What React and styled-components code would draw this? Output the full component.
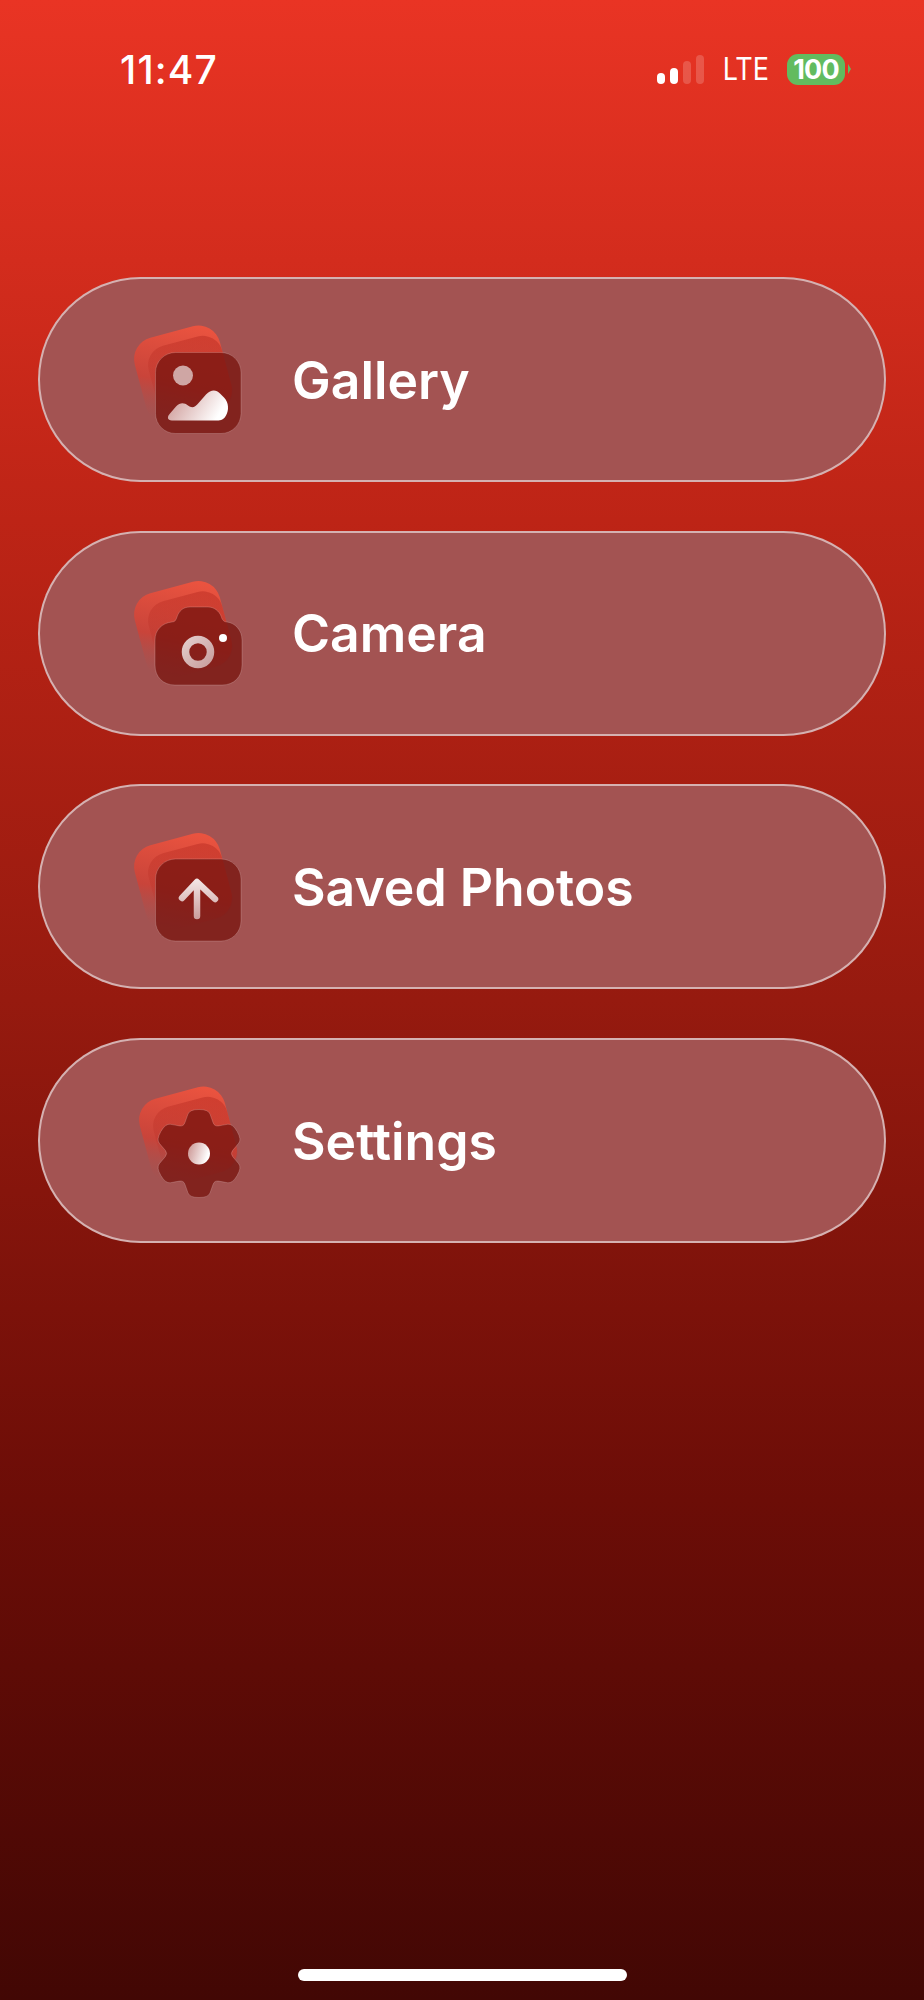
import React from 'react';
import styled, { createGlobalStyle } from 'styled-components';

const GlobalStyle = createGlobalStyle`
  html, body {
    margin: 0;
    padding: 0;
  }
  body {
    font-family: "Inter", "Liberation Sans", sans-serif;
  }
`;

const Screen = styled.div`
  display: flex;
  flex-direction: column;
  height: 2000px;
  overflow: hidden;
  background: linear-gradient(180deg, #e93424 0%, #bd2416 26%, #961a0f 50%, #6c0d07 75%, #420704 100%);
`;

const StatusBar = styled.div`
  display: flex;
  align-items: center;
  justify-content: space-between;
  height: 32px;
  margin-top: 53px;
  padding: 0 73px 0 120px;
`;

const Time = styled.span`
  font-size: 39px;
  font-weight: 500;
  color: #fff;
  letter-spacing: 1.2px;
`;

const StatusRight = styled.div`
  display: flex;
  align-items: center;
`;

const Signal = styled.div`
  display: flex;
  align-items: flex-end;
  gap: 5px;
  height: 30px;
  margin-right: 19px;
`;

const Bar = styled.i`
  display: block;
  width: 8px;
  height: ${p => p.$h}px;
  border-radius: 4px;
  background: ${p => (p.$on ? '#fff' : 'rgba(255,255,255,.18)')};
`;

const Network = styled.span`
  font-size: 27px;
  font-weight: 400;
  color: #fff;
  margin-right: 18px;
  transform: scaleY(1.15);
`;

const Battery = styled.div`
  display: flex;
  align-items: center;
  justify-content: center;
  width: 58px;
  height: 31px;
  border-radius: 11px;
  background: #62bb5f;
  color: #fff;
  font-size: 27px;
  font-weight: 700;
  letter-spacing: -0.8px;
`;

const BatteryNub = styled.i`
  display: block;
  width: 0;
  height: 0;
  margin-left: 3px;
  border-left: 3px solid #62bb5f;
  border-top: 5px solid transparent;
  border-bottom: 5px solid transparent;
`;

const Menu = styled.nav`
  display: flex;
  flex-direction: column;
  gap: 48.7px;
  margin: 192px 38px 0;
`;

const Pill = styled.div`
  display: flex;
  align-items: center;
  box-sizing: border-box;
  height: 205px;
  padding-left: 70px;
  border: 2px solid rgba(255, 255, 255, 0.55);
  border-radius: 103px;
  background: #a35352;
`;

const IconSvg = styled.svg`
  flex: none;
  width: 150px;
  height: 150px;
`;

const Label = styled.span`
  margin-left: 32px;
  font-size: 51.7px;
  font-weight: 600;
  color: #fff;
`;

const HomeBar = styled.div`
  width: 329px;
  height: 12px;
  margin: auto auto 19px;
  border-radius: 6px;
  background: #fff;
`;

const frontFill = 'rgba(120, 20, 14, 0.76)';
const frontEdge = 'rgba(255, 255, 255, 0.18)';

// stacked cards behind every glyph, dx/dy moves them per icon
const Back = ({ id, dx = 0, dy = 0 }) => (
  <g transform={`translate(${dx} ${dy})`}>
    <defs>
      <linearGradient id={`back-${id}`} x1="0.75" y1="0" x2="0.25" y2="1">
        <stop offset="0" stopColor="#ea533f" />
        <stop offset="0.6" stopColor="#c9443a" />
        <stop offset="1" stopColor="#a35352" stopOpacity="0.35" />
      </linearGradient>
      <linearGradient id={`inner-${id}`} x1="0.75" y1="0" x2="0.25" y2="1">
        <stop offset="0" stopColor="#b5281f" stopOpacity="0.45" />
        <stop offset="1" stopColor="#b5281f" stopOpacity="0" />
      </linearGradient>
      <linearGradient id={`light-${id}`} x1="0" y1="0" x2="1" y2="0.3">
        <stop offset="0" stopColor="#c9918e" />
        <stop offset="1" stopColor="#ffffff" />
      </linearGradient>
    </defs>
    <g transform="rotate(-15 73 64)">
      <rect x="29" y="20" width="88" height="88" rx="22" fill={`url(#back-${id})`} />
      <rect x="41" y="31" width="76" height="77" rx="20" fill={`url(#inner-${id})`} />
    </g>
  </g>
);

const GalleryIcon = () => (
  <IconSvg viewBox="0 -5.5 150 150">
    <Back id="gallery" />
    <rect x="45.5" y="42" width="85.5" height="81" rx="20" fill={frontFill} stroke={frontEdge} />
    <circle cx="73" cy="65" r="10" fill="#cfa6a4" />
    <path
      d="M62 110C57 110 57 106 60 103L66 96C70 92 74 92 78 95C82 98 85 97 89 92L96 84C101 79 106 79 110 83L114 87C119 92 119 100 116 105C114 109 111 110 107 110Z"
      fill="url(#light-gallery)"
    />
  </IconSvg>
);

const CameraIcon = () => (
  <IconSvg viewBox="0 -2 150 150">
    <defs>
      <linearGradient id="ring-camera" x1="0" y1="0" x2="1" y2="1">
        <stop offset="0" stopColor="#e2cbca" />
        <stop offset="1" stopColor="#c9a09f" />
      </linearGradient>
    </defs>
    <Back id="camera" dy={6} />
    <path
      d="M45 80C45 70 52 63 62 62C65 62 66 60 67 57C69 51 73 47 80 47L98 47C104 47 109 51 111 56C112 60 114 62 117 62C125 63 132 70 132 80L132 105C132 117 124 125 112 125L65 125C53 125 45 117 45 105Z"
      fill={frontFill}
      stroke={frontEdge}
    />
    <circle cx="88" cy="92" r="12.5" fill="none" stroke="url(#ring-camera)" strokeWidth="7.5" />
    <circle cx="113" cy="78" r="4" fill="#fff" />
  </IconSvg>
);

const SavedIcon = () => (
  <IconSvg viewBox="0 2 150 150">
    <defs>
      <linearGradient id="arrow-saved" gradientUnits="userSpaceOnUse" x1="87" y1="70" x2="87" y2="108">
        <stop offset="0" stopColor="#f3e6e5" />
        <stop offset="1" stopColor="#cb9f9d" />
      </linearGradient>
    </defs>
    <Back id="saved" dy={8} />
    <rect x="45.5" y="49" width="85.5" height="82" rx="20" fill={frontFill} stroke={frontEdge} />
    <path
      d="M87 106V73M72 88L87 72L105 89"
      fill="none"
      stroke="url(#arrow-saved)"
      strokeWidth="6.5"
      strokeLinecap="round"
      strokeLinejoin="round"
    />
  </IconSvg>
);

// six rounded lobes around 89,83, corners smoothed through edge midpoints
const gearPath = () => {
  const polar = (deg, r) => {
    const a = ((deg - 90) * Math.PI) / 180;
    return [89 + r * Math.cos(a), 83 + r * Math.sin(a)];
  };
  const ctrl = [];
  for (let k = 0; k < 6; k++) {
    const a = k * 60;
    ctrl.push(polar(a - 30, 31), polar(a - 20, 37), polar(a - 12, 45), polar(a + 12, 45), polar(a + 20, 37));
  }
  const mid = (p, q) => [(p[0] + q[0]) / 2, (p[1] + q[1]) / 2];
  const fmt = p => `${p[0].toFixed(2)} ${p[1].toFixed(2)}`;
  let d = `M${fmt(mid(ctrl[ctrl.length - 1], ctrl[0]))}`;
  ctrl.forEach((p, i) => {
    d += `Q${fmt(p)} ${fmt(mid(p, ctrl[(i + 1) % ctrl.length]))}`;
  });
  return `${d}Z`;
};

const SettingsIcon = () => (
  <IconSvg viewBox="0 -4.5 150 150">
    <Back id="settings" dx={5} dy={1} />
    <path d={gearPath()} fill={frontFill} stroke={frontEdge} />
    <circle cx="89" cy="83" r="11" fill="url(#light-settings)" />
  </IconSvg>
);

const items = [
  { label: 'Gallery', Icon: GalleryIcon },
  { label: 'Camera', Icon: CameraIcon },
  { label: 'Saved Photos', Icon: SavedIcon },
  { label: 'Settings', Icon: SettingsIcon },
];

export default function App() {
  return (
    <Screen>
      <GlobalStyle />
      <StatusBar>
        <Time>11:47</Time>
        <StatusRight>
          <Signal>
            <Bar $h={11} $on />
            <Bar $h={16} $on />
            <Bar $h={23} />
            <Bar $h={29} />
          </Signal>
          <Network>LTE</Network>
          <Battery>100</Battery>
          <BatteryNub />
        </StatusRight>
      </StatusBar>
      <Menu>
        {items.map(({ label, Icon }) => (
          <Pill key={label}>
            <Icon />
            <Label>{label}</Label>
          </Pill>
        ))}
      </Menu>
      <HomeBar />
    </Screen>
  );
}
